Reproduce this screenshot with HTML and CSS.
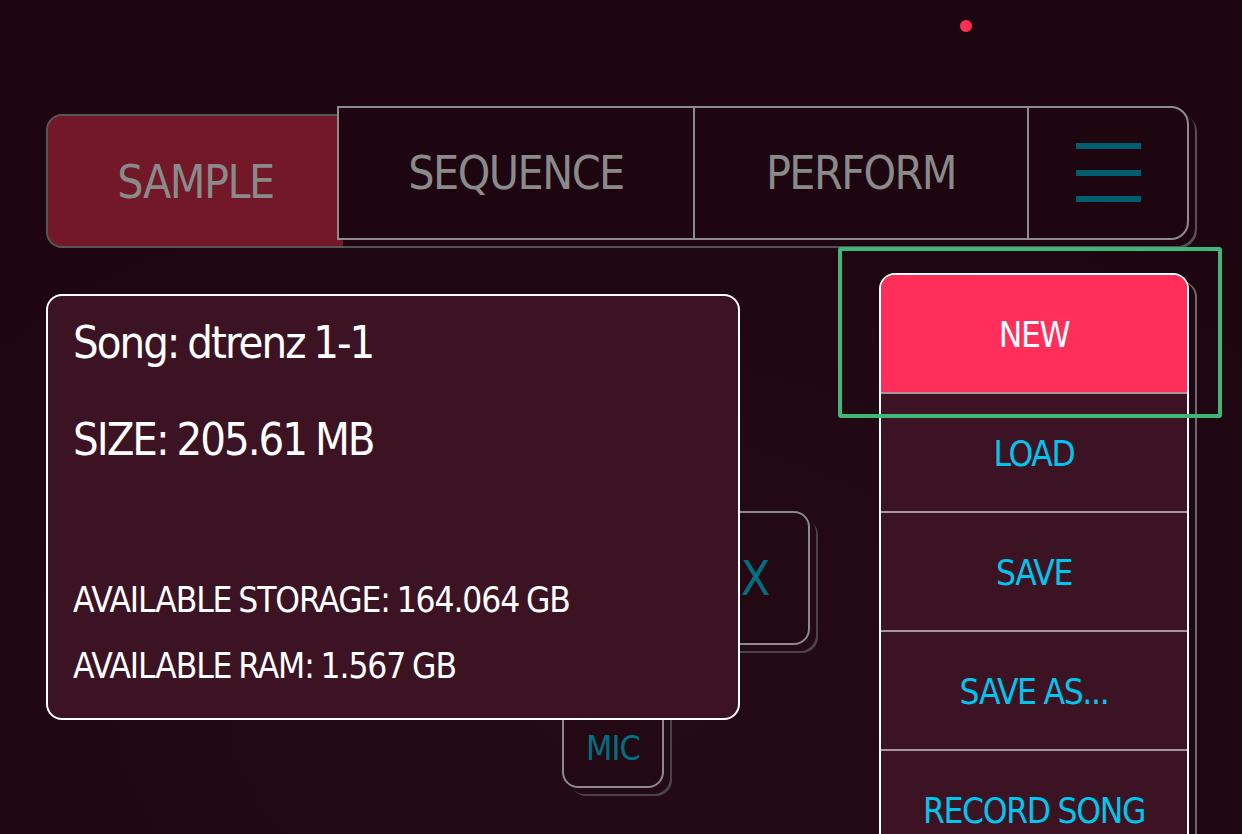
FILE: index.html
```html
<!DOCTYPE html>
<html lang="en">
<head>
<meta charset="utf-8">
<title>Song menu</title>
<link rel="stylesheet" href="styles.css">
</head>
<body>
<div class="screen">
  <span class="status-dot"></span>

  <nav class="tabbar">
    <div class="tab tab-active">SAMPLE</div>
    <div class="tab-group">
      <div class="tab tab-seq">SEQUENCE</div>
      <div class="tab tab-perf">PERFORM</div>
      <div class="tab tab-menu">
        <svg class="burger" width="65" height="60" viewBox="0 0 65 60" aria-hidden="true">
          <rect x="0" y="0" width="65" height="6" fill="#005e6f"/>
          <rect x="0" y="27" width="65" height="6" fill="#005e6f"/>
          <rect x="0" y="53" width="65" height="6" fill="#005e6f"/>
        </svg>
      </div>
    </div>
  </nav>

  <div class="workspace">
    <div class="pad pad-fx">FX</div>
    <div class="pad pad-mic">MIC</div>
  </div>

  <section class="info-card">
    <p class="info-big">Song: dtrenz 1-1</p>
    <p class="info-big info-size">SIZE: 205.61 MB</p>
    <p class="info-small info-storage">AVAILABLE STORAGE: 164.064 GB</p>
    <p class="info-small info-ram">AVAILABLE RAM: 1.567 GB</p>
  </section>

  <ul class="song-menu">
    <li class="menu-item menu-new">NEW</li>
    <li class="menu-item">LOAD</li>
    <li class="menu-item">SAVE</li>
    <li class="menu-item">SAVE AS...</li>
    <li class="menu-item">RECORD SONG</li>
  </ul>

  <div class="highlight"></div>
</div>
</body>
</html>
```

FILE: styles.css
```css
html, body {
  margin: 0;
  padding: 0;
  background: #1d0610;
}

.screen {
  position: relative;
  z-index: 0;
  width: 1242px;
  height: 834px;
  overflow: hidden;
  background: radial-gradient(ellipse 900px 600px at 620px 700px, #250b16 0%, #1d0610 100%);
  font-family: "DejaVu Sans Condensed", "Liberation Sans Narrow", "Liberation Sans", sans-serif;
  display: flex;
  flex-direction: column;
}

.status-dot {
  position: absolute;
  left: 960px;
  top: 20px;
  width: 12px;
  height: 12px;
  border-radius: 50%;
  background: #ff2d57;
}

/* ---------- tab bar ---------- */
.tabbar {
  display: flex;
  align-items: flex-start;
  margin: 106px 0 0 46px;
}

.tab {
  display: flex;
  align-items: center;
  justify-content: center;
  box-sizing: border-box;
  height: 130px;
  font-size: 46px;
  letter-spacing: -1.5px;
  color: #8a8a8a;
}

.tab-active {
  width: 299px;
  height: 134px;
  margin-top: 8px;
  margin-right: -8px;
  background: #731828;
  border: 2px solid #565656;
  border-right: none;
  border-radius: 16px 0 0 16px;
  padding-right: 2px;
  padding-top: 2px;
}

.tab-group {
  display: flex;
  width: 852px;
  height: 134px;
  box-sizing: border-box;
  border: 2px solid #8c8c8c;
  border-radius: 0 18px 18px 0;
  background: #1d0610;
  box-shadow: 6px 6px 0 0 #1d0610, 8px 8px 0 0 #545054;
}

.tab-seq { width: 354px; }

.tab-perf {
  width: 334px;
  border-left: 2px solid #8c8c8c;
}

.tab-menu {
  width: 160px;
  border-left: 2px solid #8c8c8c;
}

.burger { display: block; }

/* ---------- pads under the popup ---------- */
.workspace {
  display: flex;
  flex-direction: column;
  align-items: flex-start;
  padding-top: 263px;
}

.pad {
  box-sizing: border-box;
  display: flex;
  align-items: center;
  justify-content: center;
  height: 134px;
  border: 2px solid #8a8a8a;
  border-radius: 16px;
  background: #230914;
  color: #006f80;
  box-shadow: 6px 6px 0 0 #240a15, 8px 8px 0 0 #4a4448;
}

.pad-fx {
  width: 134px;
  margin-left: 676px;
  font-size: 48px;
}

.pad-mic {
  width: 102px;
  margin-left: 562px;
  margin-top: 9px;
  font-size: 34px;
  letter-spacing: -1px;
  padding-top: 54px;
}

/* ---------- song info popup ---------- */
.info-card {
  position: absolute;
  left: 46px;
  top: 294px;
  width: 694px;
  height: 426px;
  box-sizing: border-box;
  margin: 0;
  padding: 19px 0 0 25px;
  background: #3c1323;
  border: 2px solid #ffffff;
  border-radius: 16px;
  color: #ffffff;
}

.info-card .info-big,
.info-card .info-small {
  margin: 0;
  white-space: nowrap;
}

.info-card .info-big {
  font-size: 45px;
  line-height: 56px;
  letter-spacing: -2px;
  word-spacing: -2px;
}

.info-card .info-size { margin-top: 41px; }

.info-card .info-small {
  font-size: 35px;
  line-height: 44px;
  letter-spacing: -1.1px;
  word-spacing: -2px;
}

.info-card .info-storage { margin-top: 110px; }
.info-card .info-ram { margin-top: 22px; }

/* ---------- dropdown menu ---------- */
.song-menu {
  position: absolute;
  left: 879px;
  top: 273px;
  width: 310px;
  margin: 0;
  padding: 0;
  list-style: none;
  box-sizing: border-box;
  border: 2px solid #ffffff;
  border-bottom: none;
  border-radius: 16px 16px 0 0;
  background: #3c1323;
  box-shadow: 6px 8px 0 0 #1e0711, 8px 8px 0 0 #6e686c;
  overflow: hidden;
}

.menu-item {
  display: flex;
  align-items: center;
  justify-content: center;
  height: 115px;
  padding-top: 2px;
  border-bottom: 2px solid #a8979f;
  font-size: 35px;
  letter-spacing: -1.3px;
  word-spacing: -1px;
  color: #00c6ee;
  box-sizing: content-box;
}

.menu-new {
  background: #ff2e5b;
  color: #ffffff;
}

/* ---------- focus highlight ---------- */
.highlight {
  position: absolute;
  left: 838px;
  top: 247px;
  width: 384px;
  height: 171px;
  box-sizing: border-box;
  border: 4px solid #3db77a;
  border-radius: 3px;
}
```
